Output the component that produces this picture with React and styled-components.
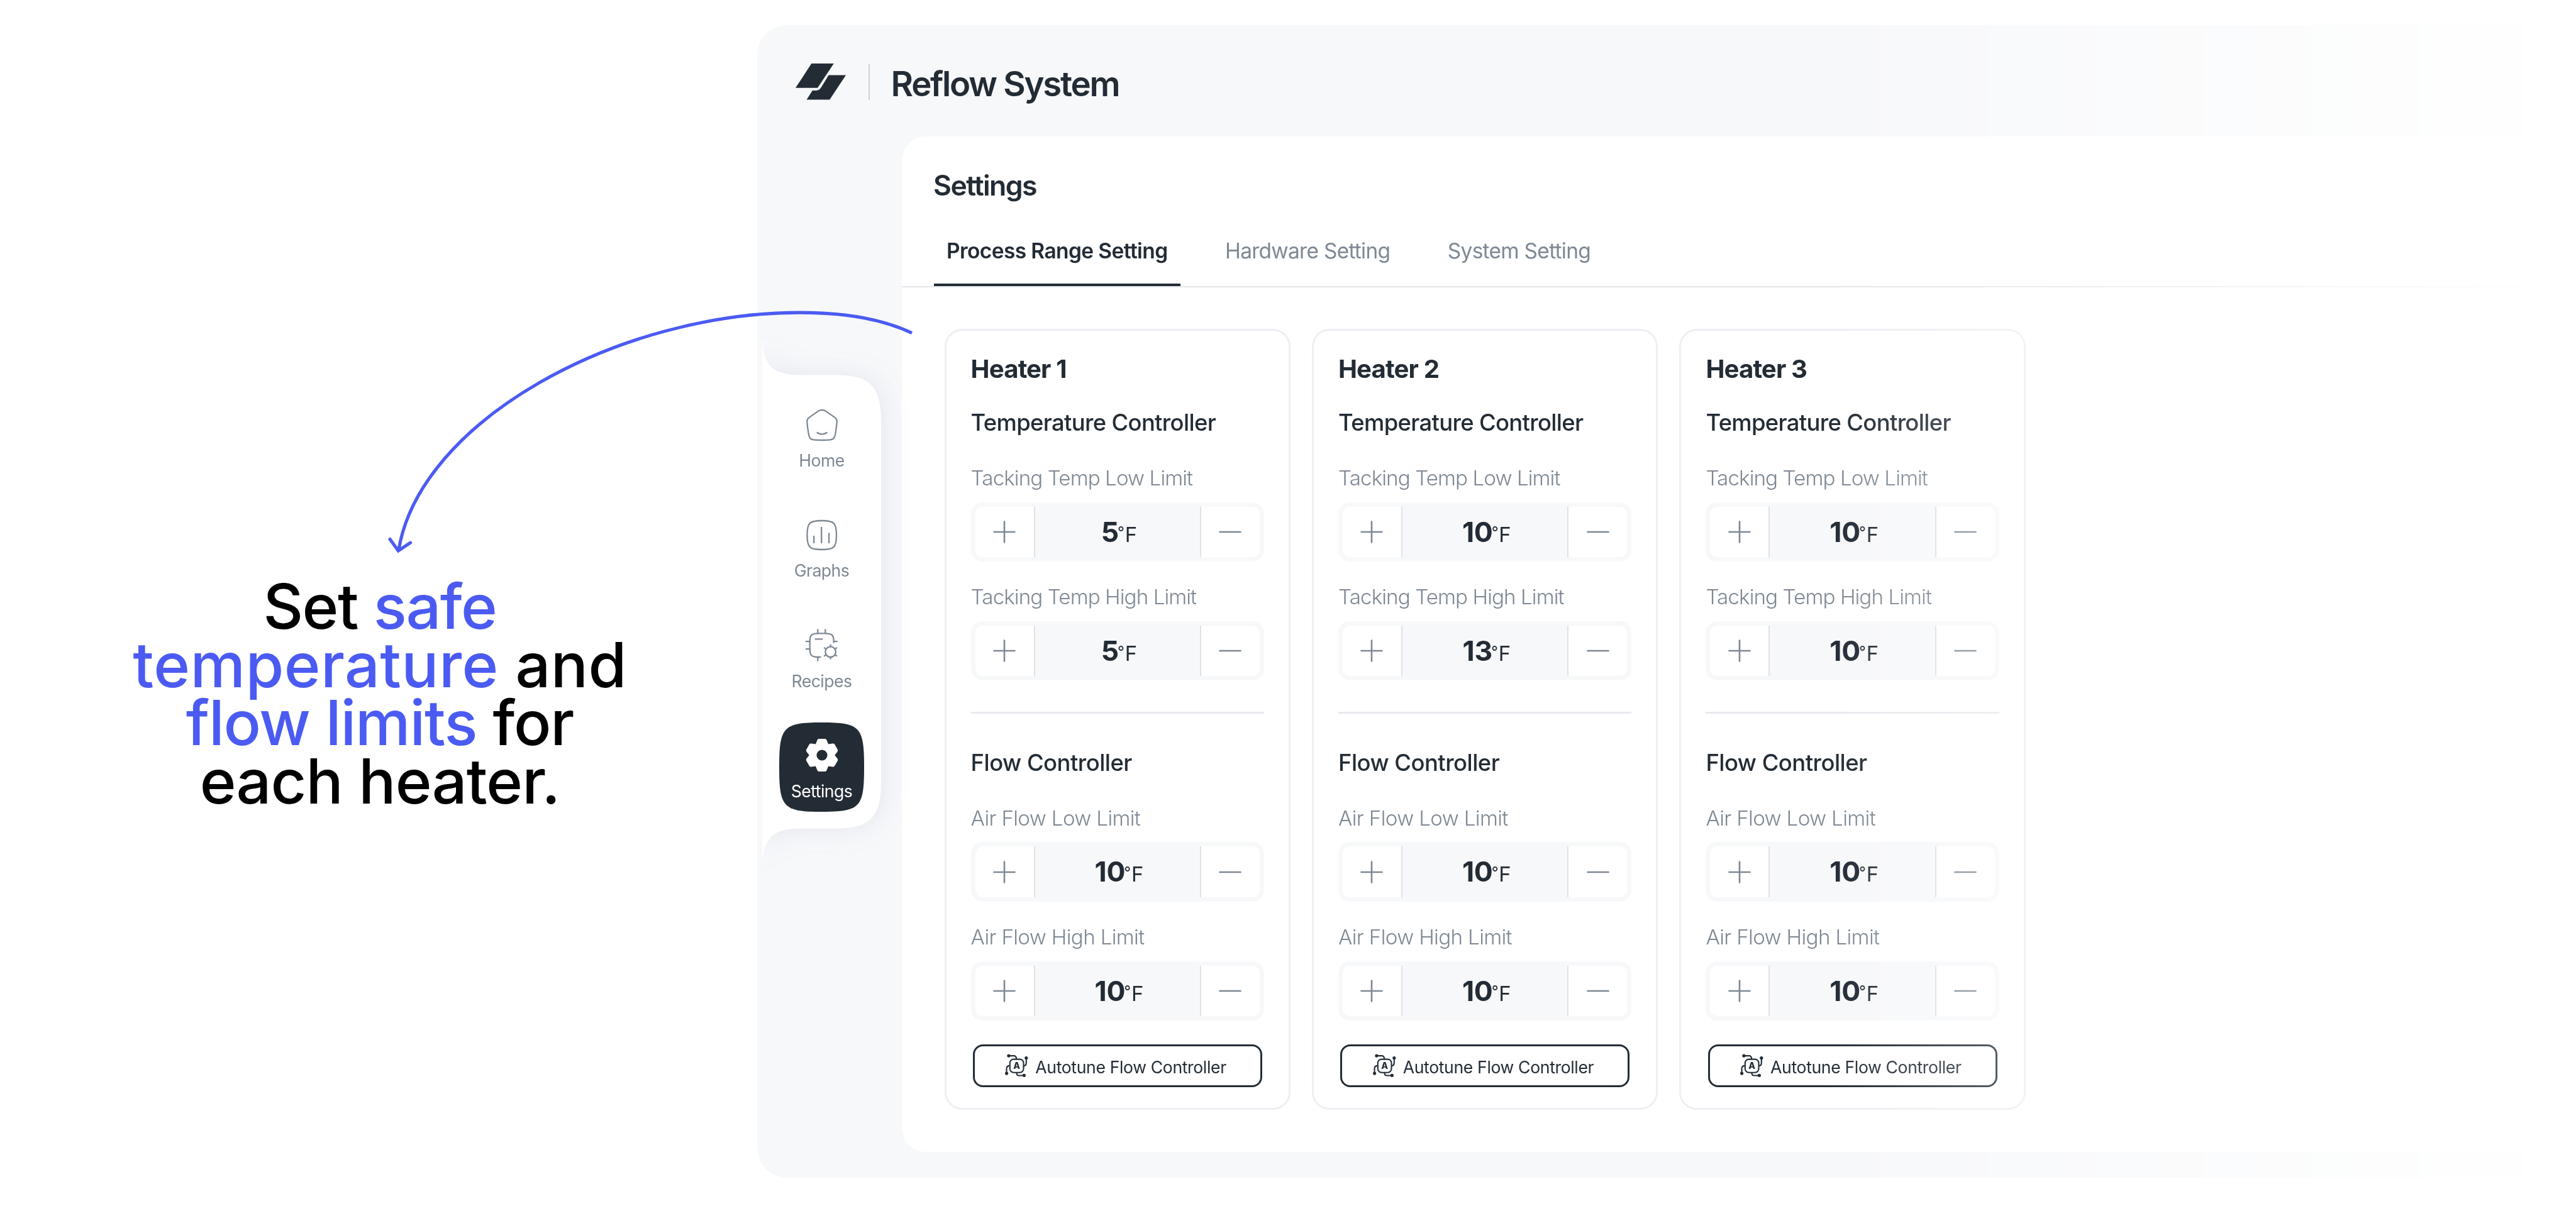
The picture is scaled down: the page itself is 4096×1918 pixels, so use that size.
import React from 'react';
import styled, { createGlobalStyle } from 'styled-components';

const GlobalStyle = createGlobalStyle`
  * {
    box-sizing: border-box;
  }
  body {
    margin: 0;
    background: #fff;
    color: #232c35;
    font-family: Inter, 'Liberation Sans', sans-serif;
    overflow: hidden;
  }
  h1, h2, h3, p {
    margin: 0;
  }
  button {
    font: inherit;
    color: inherit;
    background: none;
    border: 0;
    padding: 0;
  }
`;

const Page = styled.main`
  position: relative;
  display: flex;
  width: 4096px;
  height: 1918px;
  padding: 40px 82px 45px 0;
  overflow: hidden;
`;

/* ---------- callout ---------- */

const Callout = styled.section`
  width: 1204px;
  flex: none;
  padding: 879px 0 0 4px;
  text-align: center;
`;

const CalloutLine = styled.p`
  color: #000;
  font-size: 98.5px;
  font-weight: 460;
  line-height: 92.6px;
  letter-spacing: ${props => props.$tracking}em;
  white-space: nowrap;
`;

const Accent = styled.span`
  color: #4b5bf2;
`;

const Arrow = styled.svg`
  position: absolute;
  left: 599.3px;
  top: 479.5px;
  width: 864.8px;
  height: 419.5px;
  z-index: 3;
  fill: none;
  stroke: #4b5bf2;
  stroke-width: 6;
`;

/* ---------- window ---------- */

const Window = styled.section`
  display: flex;
  flex-direction: column;
  flex: 1;
  padding-bottom: 41px;
  border-radius: 47px 0 0 47px;
  background: #f7f8fa;
  mask-image: linear-gradient(to right, #000 1700px, transparent 2900px);
`;

const Header = styled.header`
  display: flex;
  align-items: center;
  height: 176.5px;
  flex: none;
  padding: 4px 0 0 61px;
`;

const HeaderRule = styled.div`
  width: 2px;
  height: 57px;
  margin: 0 33.5px 0 36px;
  background: #cdd1d9;
`;

const AppName = styled.h1`
  padding-top: 5px;
  font-size: 54.5px;
  font-weight: 600;
  line-height: 64px;
  letter-spacing: -0.041em;
`;

const Body = styled.div`
  display: flex;
  flex: 1;
  min-height: 0;
`;

const Sidebar = styled.aside`
  position: relative;
  z-index: 1;
  width: 230px;
  flex: none;
  padding: 312.5px 0 0 8px;
`;

const Nav = styled.nav`
  position: relative;
  display: flex;
  flex-direction: column;
  align-items: center;
  gap: 33.3px;
  width: 189px;
  height: 856px;
  padding-top: 94px;
`;

const NavShape = styled.svg`
  position: absolute;
  left: 0;
  top: -80px;
  width: 289px;
  height: 1016px;
  z-index: -1;
`;

const NavItem = styled.button`
  display: flex;
  flex-direction: column;
  align-items: center;
  gap: 14.5px;
  width: 135px;
  height: 142px;
  flex: none;
  padding-top: 26.5px;
  color: ${props => (props.$active ? '#fff' : '#7e8893')};
  position: relative;
`;

const ActiveShape = styled.svg`
  position: absolute;
  left: 0;
  top: 0;
  width: 135px;
  height: 142px;
  z-index: -1;
`;

const NavIcon = styled.svg`
  width: 52px;
  height: 52px;
  flex: none;
  overflow: visible;
  fill: none;
  stroke: currentColor;
  stroke-width: 2.3;
  stroke-linecap: round;
  stroke-linejoin: round;
`;

const NavLabel = styled.span`
  font-size: 26.6px;
  line-height: 32px;
  letter-spacing: -0.02em;
`;

const Panel = styled.section`
  flex: 1;
  background: #fff;
  border-radius: 38px 0 0 38px;
`;

const PanelTitle = styled.h2`
  padding: 51px 0 0 50px;
  font-size: 44.6px;
  font-weight: 600;
  line-height: 55px;
  letter-spacing: -0.036em;
`;

const Tabs = styled.div`
  display: flex;
  gap: 51.5px;
  padding-left: 51px;
  border-bottom: 2px solid #e3e5e9;
`;

const Tab = styled.button`
  padding: 56px 20px 32px;
  border-bottom: 4px solid ${props => (props.$active ? '#232c35' : 'transparent')};
  color: ${props => (props.$active ? '#232c35' : '#7e8893')};
  font-size: 33.5px;
  font-weight: ${props => (props.$active ? 600 : 400)};
  line-height: 40px;
  letter-spacing: ${props => (props.$active ? -0.018 : -0.022)}em;
`;

const Cards = styled.div`
  display: flex;
  gap: 34px;
  padding: 66.5px 0 0 67.6px;
`;

const Card = styled.article`
  width: 550.4px;
  height: 1242px;
  padding: 36.5px 39px 0;
  border: 3px solid #eeeff4;
  border-radius: 28px;
`;

const CardTitle = styled.h3`
  margin-bottom: 39.6px;
  font-size: 40.2px;
  font-weight: 700;
  line-height: 48px;
  letter-spacing: -0.022em;
`;

const SectionTitle = styled.p`
  margin-bottom: 45.8px;
  font-size: 36.4px;
  font-weight: 450;
  line-height: 44px;
  letter-spacing: ${props => (props.$long ? -0.018 : -0.014)}em;
`;

const Fields = styled.div`
  display: flex;
  flex-direction: column;
  gap: 36px;
`;

const Field = styled.div`
  display: flex;
  flex-direction: column;
  gap: 18.9px;
`;

const FieldLabel = styled.span`
  color: #7e8893;
  font-size: 33.2px;
  font-weight: 300;
  line-height: 40px;
  letter-spacing: ${props => (props.$long ? -0.028 : -0.02)}em;
`;

const Stepper = styled.div`
  display: flex;
  height: 94.3px;
  padding: 7px;
  border-radius: 18px;
  background: #f7f8fa;
`;

const StepButton = styled.button`
  display: flex;
  align-items: center;
  justify-content: center;
  width: 95px;
  background: #fff;
  ${props =>
    props.$side === 'left'
      ? 'border-right: 2px solid #dfe1e6; border-radius: 12px 0 0 12px;'
      : 'border-left: 2px solid #dfe1e6; border-radius: 0 12px 12px 0;'}
`;

const StepIcon = styled.svg`
  width: 36px;
  height: 36px;
  fill: none;
  stroke: #7e8893;
  stroke-width: 2.6;
  stroke-linecap: round;
`;

const Reading = styled.div`
  display: flex;
  align-items: baseline;
  justify-content: center;
  flex: 1;
  padding-left: 5px;
  font-size: 44.5px;
  font-weight: 700;
  line-height: 81px;
  letter-spacing: -0.005em;
`;

const Unit = styled.span`
  margin-left: -2px;
  font-size: 32.8px;
  font-weight: 400;
`;

const Degree = styled.span`
  margin-right: 1px;
  font-size: 24px;
  vertical-align: 6.4px;
  line-height: 1;
`;

const Divider = styled.hr`
  height: 3px;
  margin: 49.5px 0 56px;
  border: 0;
  background: #e9eaee;
`;

const AutotuneButton = styled.button`
  display: flex;
  align-items: center;
  justify-content: center;
  gap: 11px;
  width: 460px;
  height: 68px;
  margin: 38px 0 0 3.5px;
  padding-right: 6px;
  border: 3px solid #232c35;
  border-radius: 16px;
`;

const AutotuneIcon = styled.svg`
  width: 37px;
  height: 37px;
  fill: none;
  stroke: currentColor;
  stroke-width: 2.1;

  circle,
  text {
    fill: currentColor;
    stroke: none;
  }
  text {
    font-size: 14px;
    font-weight: 800;
  }
`;

const AutotuneLabel = styled.span`
  padding-top: 4px;
  font-size: 26.6px;
  line-height: 32px;
  letter-spacing: -0.0135em;
`;

/* ---------- icons ---------- */

const Logo = () => (
  <svg width="80" height="58" viewBox="0 0 80 58" fill="#232c35">
    <path d="M25.3 0H60.8L35 38.8H0z" />
    <path d="M52.6 18.4H80L54.2 57.6H17.6L26.8 42.9H32.6C36.6 42.9 39 41 41 37.6z" />
  </svg>
);

const HomeIcon = () => (
  <NavIcon viewBox="0 0 52 52">
    <path d="M20.5 3.6C24.3 1.4 27.7 1.4 31.5 3.6L46 13.6C49 15.7 50 17.5 49.7 21C49.2 28 48.3 34 47.2 40.5C46 47 44 49.3 38 49.7C30 50.1 22 50.1 14 49.7C8 49.3 6 47 4.8 40.5C3.7 34 2.8 28 2.3 21C2 17.5 3 15.7 6 13.6Z" />
    <path d="M18.5 38C23 41.6 29 41.6 33.5 38" />
  </NavIcon>
);

const GraphsIcon = () => (
  <NavIcon viewBox="0 0 52 52">
    <path d="M2.4 26C2.4 6.5 6.2 3 25.7 3S49 6.5 49 26S45.2 49 25.7 49S2.4 45.5 2.4 26Z" />
    <path d="M13.2 28V38.2M25.2 13.8V38.2M37.1 23.5V38.2" />
  </NavIcon>
);

const RecipesIcon = () => (
  <NavIcon viewBox="0 0 52 52">
    <path d="M44.7 21.6V20.2C44.7 10 42 7.3 31.3 7.3H20C9.5 7.3 6.7 10 6.7 20.2V32.1C6.7 42 9.5 45 19.3 45H23.6" />
    <path d="M19.3 1.5V7.3M31.3 1.5V7.3M.8 20.2H6.7M.8 32.1H6.7M19.3 45V50.5M44.7 20.2H50M15.6 16.4H26.2" />
    <circle cx="39.6" cy="36.7" r="8.3" />
    <path d="M39.6 25.6V28.4M39.6 45V47.8M29.9 30.4L32.4 32.1M49.3 30.4L46.8 32.1M29.9 43L32.4 41.3M49.3 43L46.8 41.3" />
  </NavIcon>
);

const GearIcon = () => (
  <NavIcon viewBox="-26 -26 52 52">
    <g fill="#fff" stroke="none">
      <circle r="19.6" />
      {[0, 60, 120, 180, 240, 300].map(deg => (
        <path
          key={deg}
          transform={`rotate(${deg})`}
          d="M-11.5-14L-7.6-23.8Q-6.8-26-4.8-26H4.8Q6.8-26 7.6-23.8L11.5-14Z"
        />
      ))}
      <circle r="8.6" fill="#232c35" />
    </g>
  </NavIcon>
);

const PlusIcon = () => (
  <StepIcon viewBox="0 0 36 36">
    <path d="M1.5 18H34.5M18 1.5V34.5" />
  </StepIcon>
);

const MinusIcon = () => (
  <StepIcon viewBox="0 0 36 36">
    <path d="M1.5 18H34.5" />
  </StepIcon>
);

const AutoIcon = () => (
  <AutotuneIcon viewBox="0 0 37 37">
    <rect x="7.8" y="8.6" width="21.7" height="21.2" rx="6" />
    <path d="M5.9 3.1H14.5Q18.1 3.1 18.1 8.6M33.8 6.6V14.5Q33.8 19 29.5 19.1M30.4 34.5H22Q18.4 34.5 18.4 29.7M2.5 31.1V23.5Q2.5 18.9 7.8 18.9" />
    <circle cx="5.9" cy="3.1" r="2.6" />
    <circle cx="33.8" cy="6.6" r="2.6" />
    <circle cx="30.4" cy="34.3" r="2.6" />
    <circle cx="2.6" cy="31.1" r="2.6" />
    <text x="18.6" y="24.2" textAnchor="middle">
      A
    </text>
  </AutotuneIcon>
);

/* ---------- data ---------- */

const navItems = [
  { label: 'Home', icon: HomeIcon },
  { label: 'Graphs', icon: GraphsIcon },
  { label: 'Recipes', icon: RecipesIcon },
  { label: 'Settings', icon: GearIcon, active: true }
];

const tabs = ['Process Range Setting', 'Hardware Setting', 'System Setting'];

const heaters = [
  { name: 'Heater 1', temp: [5, 5], flow: [10, 10] },
  { name: 'Heater 2', temp: [10, 13], flow: [10, 10] },
  { name: 'Heater 3', temp: [10, 10], flow: [10, 10] }
];

const LimitField = ({ label, value }) => (
  <Field>
    <FieldLabel $long={label.length > 20}>{label}</FieldLabel>
    <Stepper>
      <StepButton $side="left">
        <PlusIcon />
      </StepButton>
      <Reading>
        {value}
        <Unit>
          <Degree>°</Degree>F
        </Unit>
      </Reading>
      <StepButton $side="right">
        <MinusIcon />
      </StepButton>
    </Stepper>
  </Field>
);

const HeaterCard = ({ heater }) => (
  <Card>
    <CardTitle>{heater.name}</CardTitle>
    <SectionTitle $long>Temperature Controller</SectionTitle>
    <Fields>
      <LimitField label="Tacking Temp Low Limit" value={heater.temp[0]} />
      <LimitField label="Tacking Temp High Limit" value={heater.temp[1]} />
    </Fields>
    <Divider />
    <SectionTitle>Flow Controller</SectionTitle>
    <Fields>
      <LimitField label="Air Flow Low Limit" value={heater.flow[0]} />
      <LimitField label="Air Flow High Limit" value={heater.flow[1]} />
    </Fields>
    <AutotuneButton>
      <AutoIcon />
      <AutotuneLabel>Autotune Flow Controller</AutotuneLabel>
    </AutotuneButton>
  </Card>
);

const App = () => (
  <Page>
    <GlobalStyle />
    <Callout>
      <CalloutLine $tracking={-0.015}>
        Set <Accent>safe</Accent>
      </CalloutLine>
      <CalloutLine $tracking={0.004}>
        <Accent>temperature</Accent> and
      </CalloutLine>
      <CalloutLine $tracking={-0.012}>
        <Accent>flow limits</Accent> for
      </CalloutLine>
      <CalloutLine $tracking={-0.009}>each heater.</CalloutLine>
    </Callout>

    <Window>
      <Header>
        <Logo />
        <HeaderRule />
        <AppName>Reflow System</AppName>
      </Header>
      <Body>
        <Sidebar>
          <Nav>
            <NavShape viewBox="0 -80 289 1016">
              <defs>
                <filter id="nav-shadow" x="-50%" y="-20%" width="200%" height="140%">
                  <feDropShadow
                    dx="4"
                    dy="0"
                    stdDeviation="19"
                    floodColor="#969bbe"
                    floodOpacity="0.2"
                  />
                </filter>
              </defs>
              <path
                filter="url(#nav-shadow)"
                fill="#fff"
                d="M0 0C0 50 12 67.5 64 67.5H115C168 67.5 189 82 189 140V715C189 774 168 788.6 115 788.6H64C12 788.6 0 806 0 856Z"
              />
            </NavShape>
            {navItems.map(({ label, icon: Icon, active }) => (
              <NavItem key={label} $active={active}>
                {active && (
                  <ActiveShape viewBox="0 0 135 142">
                    <path
                      fill="#232c35"
                      d="M0 71C0 7 6 0 67.5 0S135 7 135 71S129 142 67.5 142S0 135 0 71Z"
                    />
                  </ActiveShape>
                )}
                <Icon />
                <NavLabel>{label}</NavLabel>
              </NavItem>
            ))}
          </Nav>
        </Sidebar>
        <Panel>
          <PanelTitle>Settings</PanelTitle>
          <Tabs>
            {tabs.map((tab, i) => (
              <Tab key={tab} $active={i === 0}>
                {tab}
              </Tab>
            ))}
          </Tabs>
          <Cards>
            {heaters.map(heater => (
              <HeaterCard key={heater.name} heater={heater} />
            ))}
          </Cards>
        </Panel>
      </Body>
    </Window>

    <Arrow viewBox="700 560 1010 490">
      <path d="M1694 618C1635 590 1565 580 1486 580C1150 580 780 780 740.5 1022" />
      <path d="M724.5 1001L740 1022.5L762.5 1007.5" strokeLinecap="round" />
    </Arrow>
  </Page>
);

export default App;
